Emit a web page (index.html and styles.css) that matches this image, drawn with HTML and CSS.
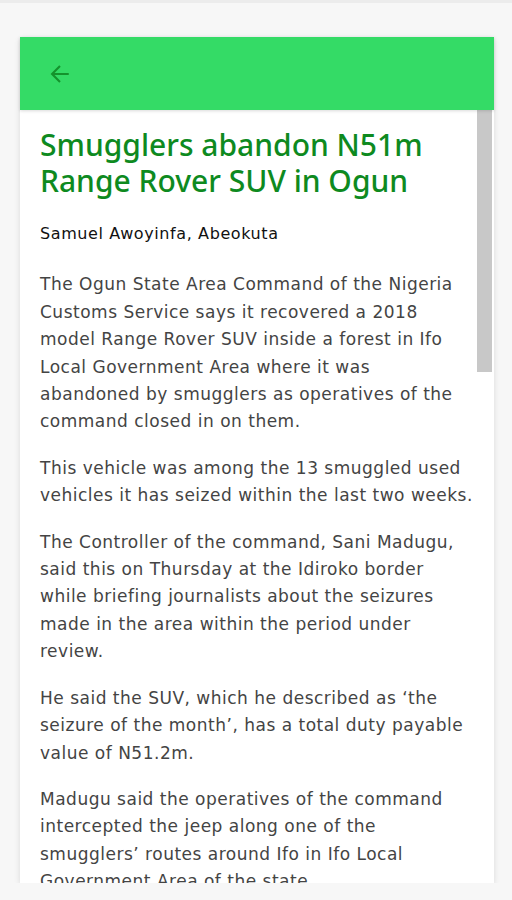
FILE: index.html
```html
<!DOCTYPE html>
<html lang="en">
<head>
    <meta charset="UTF-8">
    <meta name="viewport" content="width=device-width, initial-scale=1.0">
    <title>Smugglers abandon N51m Range Rover SUV in Ogun</title>
    <link rel="stylesheet" href="styles.css">
</head>
<body>
    <div class="topline"></div>
    <div class="card">
        <header class="card-header">
            <button class="back" aria-label="Back">
                <svg width="28" height="28" viewBox="0 0 24 24">
                    <path d="M19.5 12H5.5M12 5.2L5.2 12l6.8 6.8" fill="none" stroke="#14922c" stroke-width="1.8"/>
                </svg>
            </button>
        </header>
        <div class="card-body">
            <article class="story">
                <h1 class="title">Smugglers abandon N51m Range Rover SUV in Ogun</h1>
                <p class="author">Samuel Awoyinfa, Abeokuta</p>
                <p>The Ogun State Area Command of the Nigeria Customs Service says it recovered a 2018 model Range Rover SUV inside a forest in Ifo Local Government Area where it was abandoned by smugglers as operatives of the command closed in on them.</p>
                <p>This vehicle was among the 13 smuggled used vehicles it has seized within the last two weeks.</p>
                <p>The Controller of the command, Sani Madugu, said this on Thursday at the Idiroko border while briefing journalists about the seizures made in the area within the period under review.</p>
                <p>He said the SUV, which he described as &lsquo;the seizure of the month&rsquo;, has a total duty payable value of N51.2m.</p>
                <p>Madugu said the operatives of the command intercepted the jeep along one of the smugglers&rsquo; routes around Ifo in Ifo Local Government Area of the state.</p>
                <p>He said the vehicle was later evacuated to the command&rsquo;s warehouse.</p>
            </article>
            <!-- scrollbar thumb -->
            <div class="thumb"></div>
        </div>
    </div>
</body>
</html>
```
FILE: styles.css
```css
body {
    margin: 0;
    background-color: #f7f7f7;
    font-family: "DejaVu Sans", sans-serif;
}

.topline {
    height: 3px;
    background-color: #ececec;
}

.card {
    margin: 34px 18px 0 20px;
    height: 846px;
    display: flex;
    flex-direction: column;
    background-color: #fff;
    box-shadow: 0 2px 6px rgba(0, 0, 0, 0.12);
}

.card-header {
    height: 73px;
    flex-shrink: 0;
    display: flex;
    align-items: center;
    padding-left: 26px;
    background-color: #34db66;
    box-shadow: 0 1px 3px rgba(0, 0, 0, 0.15);
    position: relative;
    z-index: 1;
}

.back {
    border: none;
    background: none;
    padding: 0;
    display: flex;
    cursor: pointer;
}

.card-body {
    flex: 1;
    overflow: hidden;
    position: relative;
}

.story {
    padding: 17px 20px 0 20px;
}

.title {
    margin: 0 0 21px;
    font-family: "Noto Sans", sans-serif;
    font-size: 30px;
    font-weight: 500;
    line-height: 36px;
    color: #0e8a1f;
}

.story p {
    margin: 0 0 19px;
    font-size: 17px;
    letter-spacing: 0.5px;
    line-height: 27.4px;
    color: #444;
}

.story .author {
    margin-bottom: 24px;
    font-size: 16px;
    letter-spacing: 0.6px;
    color: #111;
}

.thumb {
    position: absolute;
    top: 0;
    right: 2px;
    width: 15px;
    height: 262px;
    background-color: #c8c8c8;
}
```
